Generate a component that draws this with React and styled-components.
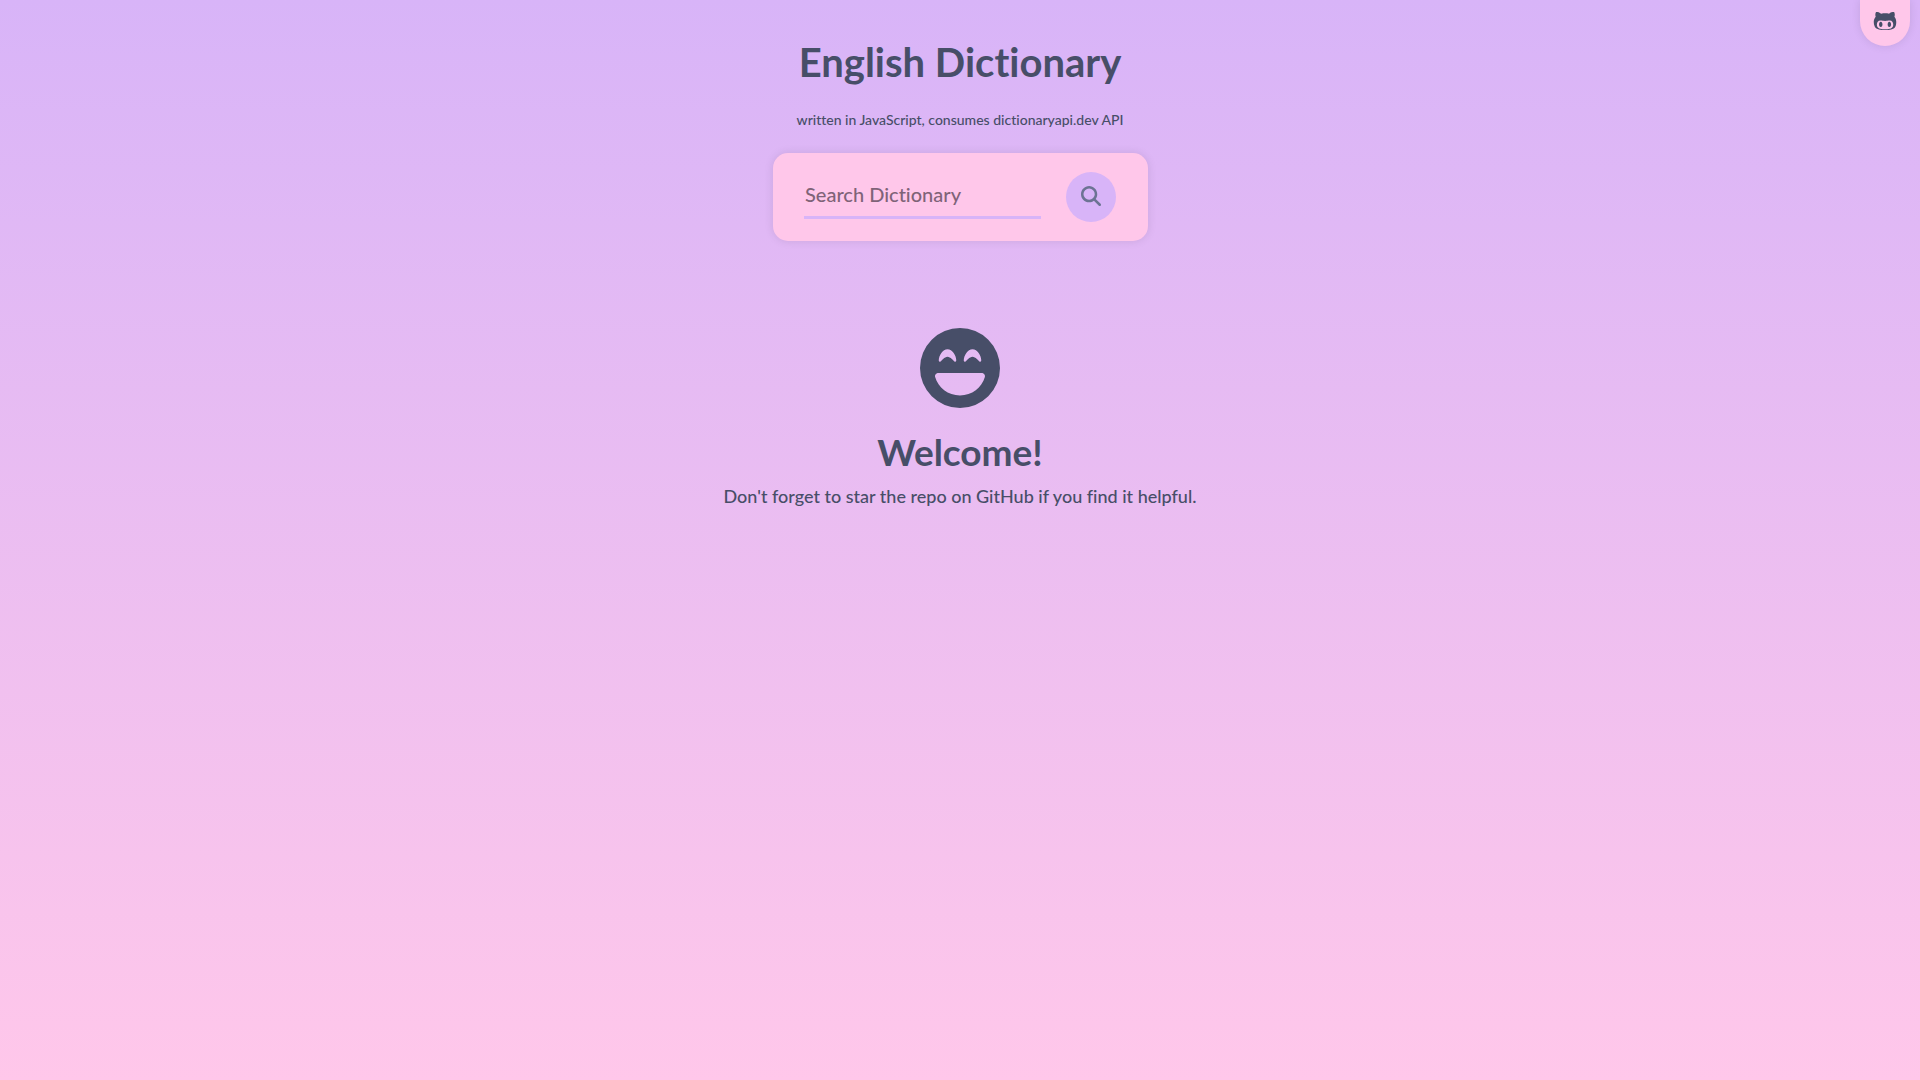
import React from "react";
import styled, { createGlobalStyle } from "styled-components";
import { FaFaceLaughBeam, FaGithubAlt, FaMagnifyingGlass } from "react-icons/fa6";

const ink = "#474e68";
const pink = "#ffc7ea";
const lavender = "#d8b4f8";

const GlobalStyle = createGlobalStyle`
  * { box-sizing: border-box; }
  body {
    margin: 0;
    min-height: 100vh;
    color: ${ink};
    background: linear-gradient(${lavender}, ${pink}) no-repeat;
    font-family: Lato, "Liberation Sans", sans-serif;
    font-variant-ligatures: none;
  }
`;

const Page = styled.div`
  display: flex;
  flex-direction: column;
  align-items: center;
  padding: 36px 16px;
`;

const RepoLink = styled.a`
  position: absolute;
  top: 0;
  right: 10px;
  display: flex;
  justify-content: center;
  align-items: center;
  width: 50px;
  height: 46px;
  padding-bottom: 4px;
  border-radius: 0 0 25px 25px;
  color: ${ink};
  background: ${pink};
  box-shadow: 0 0 10px rgba(0, 0, 0, 0.1);
  font-size: 24px;
`;

const Header = styled.header`
  display: flex;
  flex-direction: column;
  align-items: center;
  gap: 24px;
  text-align: center;
`;

const Title = styled.h1`
  margin: 0;
  font-size: 40px;
  line-height: 52px;
  font-weight: 700;
`;

const Tagline = styled.p`
  margin: 0;
  font-size: 14px;
  line-height: 16px;
  font-weight: 500;
`;

const SearchCard = styled.form`
  display: flex;
  justify-content: center;
  align-items: center;
  gap: 25px;
  width: 375px;
  max-width: 100%;
  margin-top: 25px;
  padding: 19px 16px;
  border-radius: 15px;
  background: ${pink};
  box-shadow: 0 0 10px rgba(0, 0, 0, 0.1);
`;

const SearchInput = styled.input`
  width: 237px;
  min-width: 0;
  height: 44px;
  padding: 0 1px 3px;
  border: 0;
  border-bottom: 3px solid ${lavender};
  outline: 0;
  color: ${ink};
  background: transparent;
  font-family: inherit;
  font-size: 20px;
  font-weight: 500;
  font-variant-ligatures: none;

  &::placeholder {
    color: #7f6378;
    opacity: 1;
  }
`;

const SearchButton = styled.button`
  display: flex;
  flex: none;
  justify-content: center;
  align-items: center;
  width: 50px;
  height: 50px;
  padding: 0 0 2px;
  border: 0;
  border-radius: 50%;
  color: #6c7393;
  background: ${lavender};
  font-size: 20px;
`;

const Welcome = styled.main`
  display: flex;
  flex-direction: column;
  align-items: center;
  margin-top: 87px;
  text-align: center;
`;

const WelcomeTitle = styled.h2`
  margin: 18px 0 0;
  font-size: 37px;
  line-height: 52px;
  font-weight: 700;
`;

const WelcomeText = styled.p`
  margin: 7px 0 0;
  font-size: 18px;
  line-height: 22px;
  font-weight: 500;
`;

export default function App() {
  return (
    <>
      <GlobalStyle />
      <RepoLink href="#github" aria-label="GitHub repository">
        <FaGithubAlt />
      </RepoLink>
      <Page>
        <Header>
          <Title>English Dictionary</Title>
          <Tagline>written in JavaScript, consumes dictionaryapi.dev API</Tagline>
        </Header>
        <SearchCard role="search" onSubmit={(event) => event.preventDefault()}>
          <SearchInput type="text" placeholder="Search Dictionary" aria-label="Search Dictionary" />
          <SearchButton type="submit" aria-label="Search">
            <FaMagnifyingGlass />
          </SearchButton>
        </SearchCard>
        <Welcome>
          <FaFaceLaughBeam size={80} />
          <WelcomeTitle>Welcome!</WelcomeTitle>
          <WelcomeText>Don't forget to star the repo on GitHub if you find it helpful.</WelcomeText>
        </Welcome>
      </Page>
    </>
  );
}
